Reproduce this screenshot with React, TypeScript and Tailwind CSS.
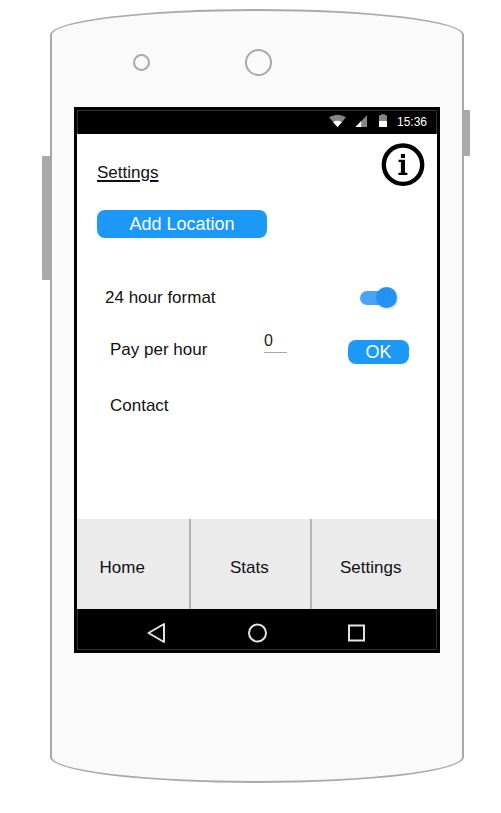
import React from 'react';

function StatusBar() {
  return (
    <div className="flex h-6 shrink-0 items-start justify-end border-x border-t border-[#303030] bg-black pr-[9px]">
      <svg width="62" height="18" viewBox="0 0 62 18" className="mr-[7px]">
        <path d="M1 6.3Q9.5 1.2 18 6.3L9.5 16Z" fill="#868686" />
        <path d="M5.1 11.2Q9.5 8.5 13.9 11.2L9.5 16Z" fill="#fff" />
        <path d="M39 4.3V16H27.5Z" fill="#868686" />
        <path d="M33.2 10.1V16H27.5Z" fill="#fff" />
        <path d="M51 10V4.3H53V3.2H57V4.3H59V10Z" fill="#868686" />
        <path d="M51 10H59V16H51Z" fill="#fff" />
      </svg>
      <span className="mt-[5px] text-[12px] leading-[12px] text-white">15:36</span>
    </div>
  );
}

function InfoIcon() {
  return (
    <svg width="44" height="44" viewBox="0 0 44 44">
      <circle cx="22" cy="21.7" r="19.2" fill="none" stroke="#000" strokeWidth="4.4" />
      <path d="M19.9 11.1H24V15.1H19.9ZM17.6 16.8H24V29.8H26.4V32H17.4V29.8H19.9V19H17.6Z" fill="#000" />
    </svg>
  );
}

function Toggle() {
  return (
    <div className="flex h-[14px] w-[36px] items-center justify-end rounded-full bg-[#4ba3f5]">
      <div className="-mr-[1px] h-[21px] w-[21px] shrink-0 rounded-full bg-[#2292f3] shadow-[1px_1px_3px_rgba(0,0,0,0.2)]" />
    </div>
  );
}

export default function App() {
  return (
    <div className="h-[813px] w-[501px] overflow-hidden bg-white pl-[50px] pt-[9px] font-['Liberation_Sans',Arial,sans-serif] text-[17px] leading-5 text-[#111]">
      <div className="relative h-[774px] w-[414px] rounded-[50%/26px] border-2 border-[#a9a9a9] bg-[#fafafa] pl-[22px]">
        <div className="absolute -left-[10px] top-[145px] h-[124px] w-[10px] rounded-l-[1px] bg-[#a9a9a9]" />
        <div className="absolute -right-[8px] top-[99px] h-[46px] w-[8px] rounded-r-[1px] bg-[#a9a9a9]" />
        <div className="flex h-24 items-center pl-[59px] pt-[7px]">
          <div className="h-[17px] w-[17px] rounded-full border-2 border-[#a9a9a9]" />
          <div className="ml-[95px] h-[27px] w-[27px] rounded-full border-2 border-[#a9a9a9]" />
        </div>

        <div className="flex h-[546px] w-[366px] flex-col border-[3px] border-black bg-white">
          <StatusBar />

          <main className="flex-1 pl-5">
            <div className="flex h-[75.6px] items-start justify-between pr-3 pt-[9px]">
              <h1 className="mt-[20px] underline decoration-[1.5px] underline-offset-2">Settings</h1>
              <InfoIcon />
            </div>
            <button className="block h-[28px] w-[170px] rounded-[8px] bg-[#1c98f7] text-[18px] leading-[28px] text-white">
              Add Location
            </button>
            <div className="mt-[50.4px] flex h-5 items-center justify-between pl-2 pr-[41px]">
              <span>24 hour format</span>
              <Toggle />
            </div>
            <div className="mt-[22px] flex h-[40px] items-center pl-[13px]">
              <span className="w-[154px]">Pay per hour</span>
              <div className="mb-[16px] h-[22px] w-[23px] border-b border-[#a8a8a8] text-[16px] leading-[20px] text-[#222]">0</div>
              <button className="ml-[61px] mt-[4px] h-[24px] w-[61px] rounded-[8px] bg-[#1c98f7] text-[18px] leading-6 text-white">
                OK
              </button>
            </div>
            <div className="mt-[26px] pl-[13px]">Contact</div>
          </main>

          <nav className="flex h-[90px] shrink-0 bg-[#ebebeb] leading-[98px]">
            <div className="w-[114px] border-r-2 border-[#b5b5b5] pl-[22.5px]">Home</div>
            <div className="w-[121px] border-r-2 border-[#b5b5b5] pl-[39px]">Stats</div>
            <div className="pl-[28px]">Settings</div>
          </nav>

          <div className="flex h-[41px] shrink-0 items-center border-x border-b border-[#303030] bg-black pl-[67px] pt-[8px]">
            <svg width="224" height="24" viewBox="0 0 224 24" fill="none" stroke="#e4e4e4" strokeWidth="2">
              <path d="M3.5 12L19 3V21Z" strokeLinejoin="round" />
              <circle cx="112.5" cy="12" r="8.5" />
              <rect x="204" y="4.5" width="15" height="15" />
            </svg>
          </div>
        </div>
      </div>
    </div>
  );
}
